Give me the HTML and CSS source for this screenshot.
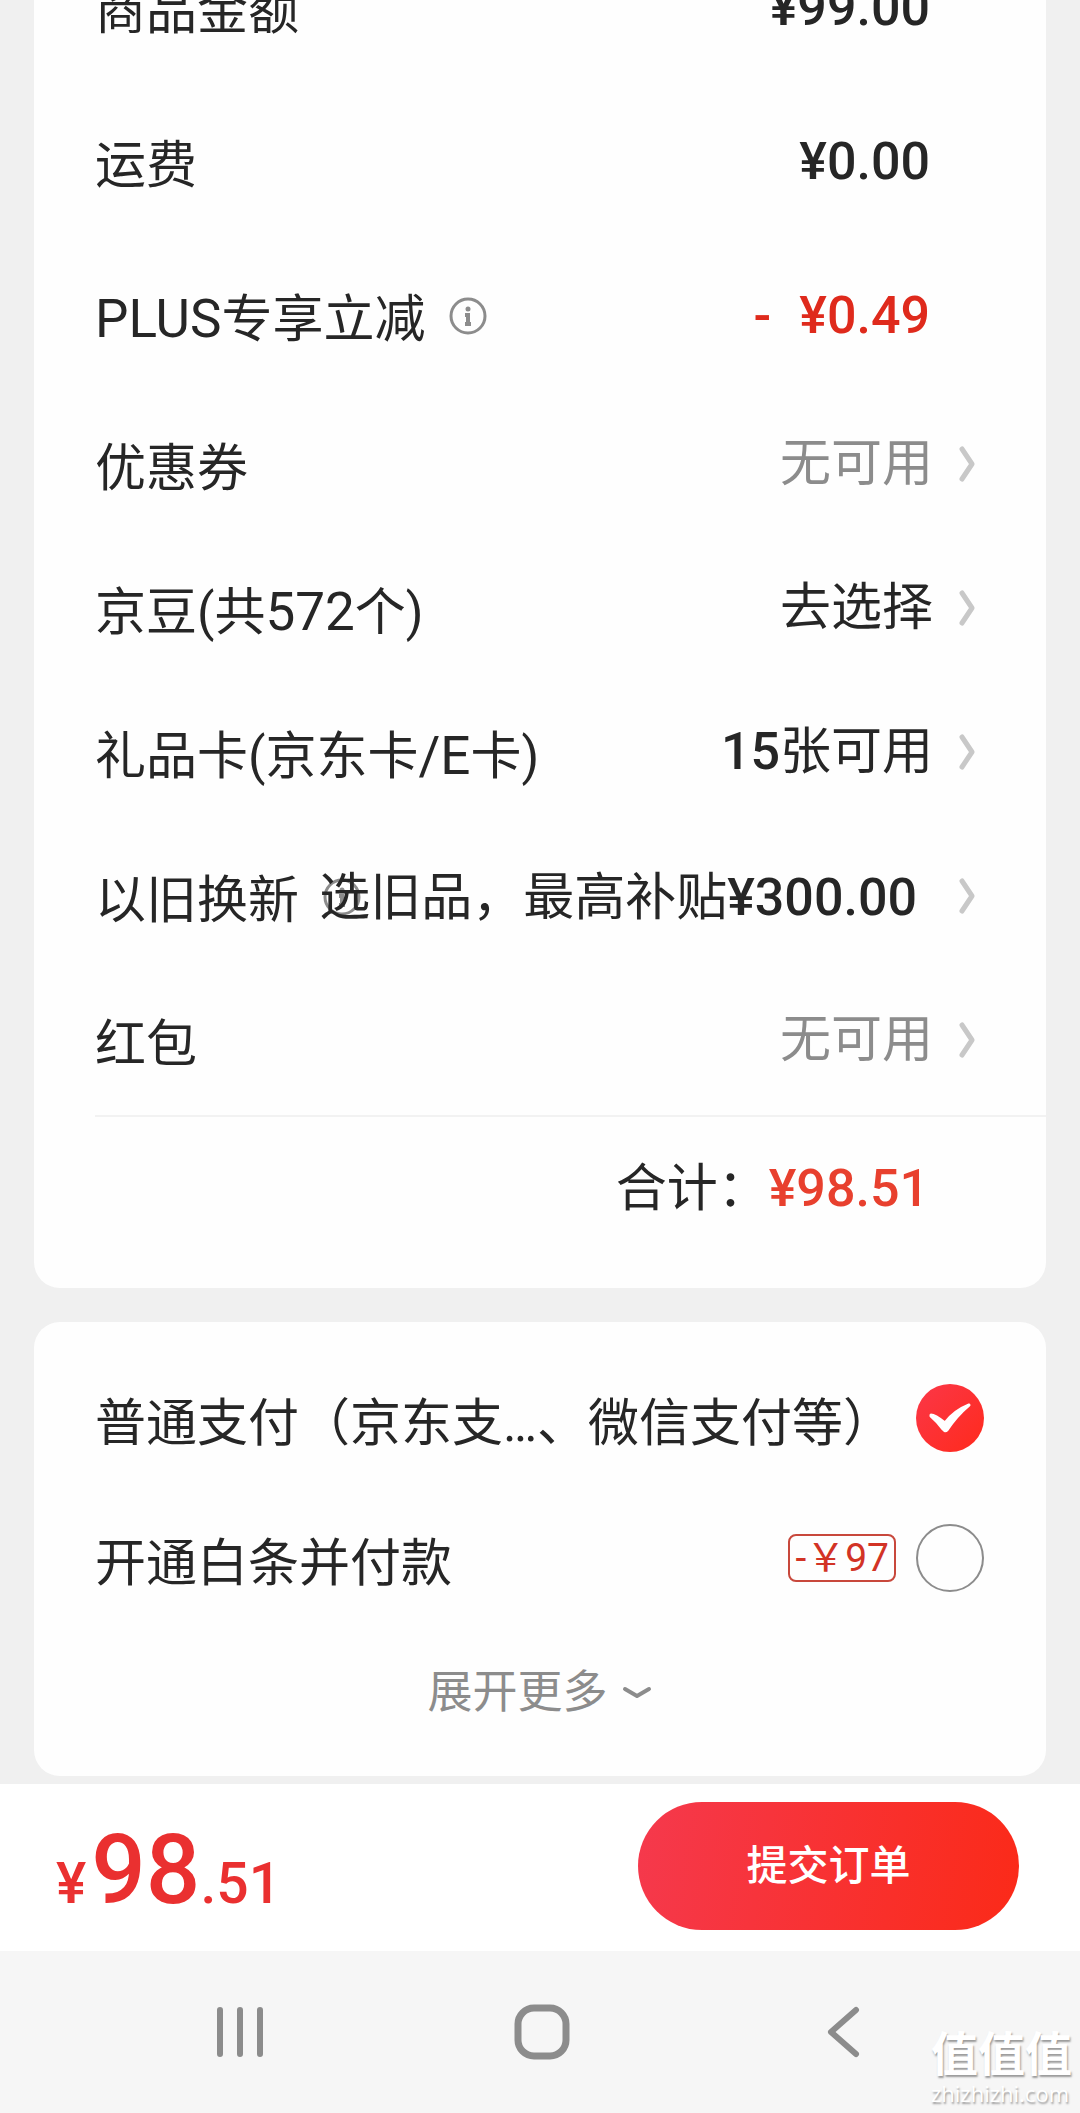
FILE: index.html
```html
<!DOCTYPE html>
<html lang="zh-CN">
<head>
<meta charset="utf-8">
<meta name="viewport" content="width=device-width, initial-scale=1">
<title>填写订单</title>
<link rel="stylesheet" href="styles.css">
</head>
<body>
<svg class="defs" aria-hidden="true">
  <symbol id="chevron" viewBox="0 0 16 36"><path d="M3 3 L13 18 L3 33" fill="none" stroke="currentColor" stroke-width="5" stroke-linecap="round" stroke-linejoin="round"/></symbol>
  <symbol id="info" viewBox="0 0 38 38"><circle cx="19" cy="19" r="17" fill="none" stroke="currentColor" stroke-width="3"/><circle cx="19" cy="12" r="2.5" fill="currentColor"/><path d="M16 18 H19 V27 M16 27 H22" fill="none" stroke="currentColor" stroke-width="4"/></symbol>
</svg>
<main class="page">
  <section class="card summary">
    <div class="row row-tall"><span class="label">商品金额</span><span class="value num">¥99.00</span></div>
    <div class="row row-tall"><span class="label">运费</span><span class="value num">¥0.00</span></div>
    <div class="row row-tall">
      <span class="label"><span><span class="latin">PLUS</span>专享立减</span><svg class="info"><use href="#info"/></svg></span>
      <span class="value num discount"><span>-</span><span>¥0.49</span></span>
    </div>
    <a class="row" href="#coupon"><span class="label">优惠券</span><span class="value muted">无可用</span><svg class="chevron"><use href="#chevron"/></svg></a>
    <a class="row" href="#beans"><span class="label"><span>京豆(共<span class="latin">572</span>个)</span></span><span class="value">去选择</span><svg class="chevron"><use href="#chevron"/></svg></a>
    <a class="row" href="#giftcard"><span class="label"><span>礼品卡(京东卡<span class="latin">/E</span>卡)</span></span><span class="value"><span class="num">15</span>张可用</span><svg class="chevron"><use href="#chevron"/></svg></a>
    <a class="row" href="#tradein"><span class="label"><span>以旧换新</span><svg class="info"><use href="#info"/></svg></span><span class="value value-wide">选旧品，最高补贴<span class="num">¥300.00</span></span><svg class="chevron"><use href="#chevron"/></svg></a>
    <a class="row" href="#redpacket"><span class="label">红包</span><span class="value muted">无可用</span><svg class="chevron"><use href="#chevron"/></svg></a>
    <div class="total"><span>合计：</span><span class="num">¥98.51</span></div>
  </section>

  <section class="card payment">
    <label class="pay-row">
      <span class="pay-name">普通支付（京东支…、微信支付等）</span>
      <span class="radio"><input type="radio" name="pay" checked><svg class="check" viewBox="0 0 68 68"><path d="M15 31 Q19 31 29 39 Q38 27 53 21 Q40 32 31 46 Q29 48 27 45 Q21 37 15 32 Z" fill="#fff" stroke="#fff" stroke-width="3" stroke-linejoin="round"/></svg></span>
    </label>
    <label class="pay-row">
      <span class="pay-name">开通白条并付款</span>
      <span class="badge">-￥97</span>
      <span class="radio"><input type="radio" name="pay"></span>
    </label>
    <button class="more" type="button">展开更多<svg viewBox="0 0 30 14"><path d="M3 3 L15 10 L27 3" fill="none" stroke="currentColor" stroke-width="4" stroke-linecap="round" stroke-linejoin="round"/></svg></button>
  </section>
</main>

<footer class="submit-bar">
  <div class="price num">¥<strong>98</strong>.51</div>
  <button class="submit" type="button">提交订单</button>
</footer>

<nav class="system-nav">
  <button type="button" aria-label="最近任务"><svg viewBox="0 0 56 56"><path d="M8 6 V50 M28 6 V50 M48 6 V50" stroke="currentColor" stroke-width="6" stroke-linecap="round"/></svg></button>
  <button type="button" aria-label="主屏幕"><svg viewBox="0 0 56 56"><rect x="4" y="4" width="48" height="48" rx="16" fill="none" stroke="currentColor" stroke-width="7"/></svg></button>
  <button type="button" aria-label="返回"><svg viewBox="0 0 56 56"><path d="M40 6 L15 28 L40 50" fill="none" stroke="currentColor" stroke-width="6" stroke-linecap="round" stroke-linejoin="round"/></svg></button>
  <div class="watermark"><span class="watermark-name">值值值</span><span class="watermark-site">zhizhizhi.com</span></div>
</nav>
</body>
</html>
```
FILE: styles.css
```css
* { box-sizing: border-box; }

body {
  margin: 0;
  min-height: 100vh;
  display: flex;
  flex-direction: column;
  overflow-x: hidden;
  background: #f0f0f0;
  color: #262626;
  font-family: Roboto, "Noto Sans CJK SC", sans-serif;
  font-size: 51px;
  line-height: 60px;
}

button { border: 0; padding: 0; background: none; font: inherit; color: inherit; }
svg { display: block; flex: none; }
.defs { position: absolute; width: 0; height: 0; }

.page { padding: 0 34px 8px; overflow: hidden; }
.card { background: #fefefe; border-radius: 26px; }

/* The list is scrolled, so its first line is partly out of view. */
.summary { margin-top: -67px; padding-left: 61px; }

.row {
  display: flex;
  align-items: center;
  height: 144px;
  padding-right: 71px;
  color: inherit;
  text-decoration: none;
  white-space: nowrap;
}
.row-tall { height: 154px; padding-right: 116px; }

.label { display: flex; align-items: center; gap: 24px; flex: 1; min-width: 0; padding-top: 3px; }
.latin { font-size: 53px; }
.info { width: 38px; height: 38px; margin-bottom: 8px; color: #8c8c8c; }

.value { padding-bottom: 7px; margin-right: 26px; }
.row-tall .value { margin-right: 0; padding-bottom: 4px; }
.value-wide { margin-right: 42px; padding-bottom: 2px; }
.muted { color: #8c8c8c; }
.num { font-size: 52px; font-weight: 500; }
.discount { display: flex; gap: 28px; color: #df2a1c; }
.chevron { width: 16px; height: 36px; margin-bottom: 6px; color: #c8c8c8; }

.total {
  display: flex;
  justify-content: flex-end;
  align-items: baseline;
  padding: 42px 117px 69px 0;
  border-top: 2px solid #f2f2f2;
}
.total .num { color: #e8402e; }

.payment { margin-top: 34px; padding: 30px 62px 53px 61px; }
.pay-row { display: flex; align-items: center; height: 140px; }
.pay-name { flex: 1; padding-top: 3px; white-space: nowrap; }
.badge {
  height: 48px;
  padding: 0 5px;
  margin: 0 20px 8px 0;
  border: 2px solid #c8483c;
  border-radius: 8px;
  color: #d23325;
  font-size: 39px;
  line-height: 44px;
}
.radio { position: relative; width: 68px; height: 68px; margin-bottom: 8px; }
.radio input {
  appearance: none;
  display: block;
  width: 68px;
  height: 68px;
  margin: 0;
  border: 2px solid #8c8c8c;
  border-radius: 50%;
}
.radio input:checked { border: 0; background: linear-gradient(135deg, #fb3748, #ff2a1c); }
.check { position: absolute; inset: 0; }

.more {
  display: flex;
  align-items: center;
  gap: 14px;
  margin: 31px auto 0;
  color: #8c8c8c;
  font-size: 45px;
}
.more svg { width: 30px; height: 14px; }

.submit-bar {
  display: flex;
  align-items: center;
  justify-content: space-between;
  height: 167px;
  padding: 0 61px 0 56px;
  background: #fff;
}
.price { padding-top: 18px; color: #ea3030; font-size: 57px; line-height: 100px; }
.price strong { margin-left: 5px; font-size: 96px; font-weight: 500; }
.submit {
  width: 381px;
  height: 128px;
  margin-bottom: 3px;
  border-radius: 64px;
  background: linear-gradient(100deg, #f5394d, #fb2a18);
  color: #fff;
  font-size: 41px;
  font-weight: 500;
}

.system-nav {
  position: relative;
  flex: 1;
  display: flex;
  align-items: center;
  justify-content: center;
  gap: 246px;
  min-height: 162px;
  padding-left: 3px;
  background: #f6f6f6;
  color: #8c8c8c;
}
.system-nav svg { width: 56px; height: 56px; }

.watermark {
  position: absolute;
  right: 8px;
  bottom: 8px;
  display: flex;
  flex-direction: column;
  color: #fff;
  text-shadow: 1px 2px 2px #999;
}
.watermark-name { font-size: 47px; font-weight: 700; line-height: 52px; }
.watermark-site { font-family: "Open Sans", sans-serif; font-size: 22px; line-height: 24px; }
```
